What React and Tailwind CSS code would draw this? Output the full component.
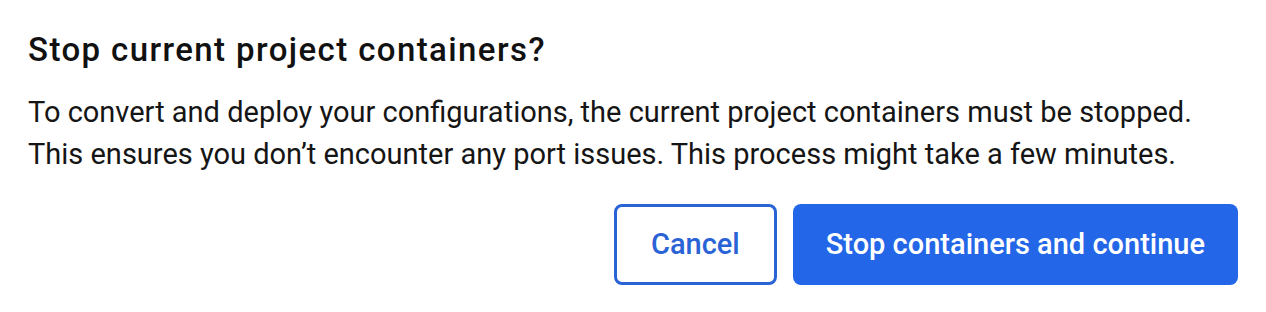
import React from 'react';

function App() {
    return (
        <div className="bg-white w-[1266px] h-[312px] px-7 pt-[30px] font-['Roboto',sans-serif] text-[#111]">
            <h2 className="text-[33px] leading-[40px] font-medium tracking-[1.4px]">
                Stop current project containers?
            </h2>
            <p className="mt-[21px] text-[29px] leading-[42px] text-[#151515]">
                To convert and deploy your configurations, the current project containers must be stopped.
                <br />
                This ensures you don’t encounter any port issues. This process might take a few minutes.
            </p>
            <div className="flex justify-end gap-4 mt-[29px]">
                <button className="h-[81px] px-[34px] border-[3px] border-[#2a63d6] rounded-lg text-[29px] font-medium text-[#2a63d6] bg-white">
                    Cancel
                </button>
                <button className="h-[81px] px-[33px] rounded-lg text-[29px] font-medium text-white bg-[#2366e8]">
                    Stop containers and continue
                </button>
            </div>
        </div>
    );
}

export default App;
